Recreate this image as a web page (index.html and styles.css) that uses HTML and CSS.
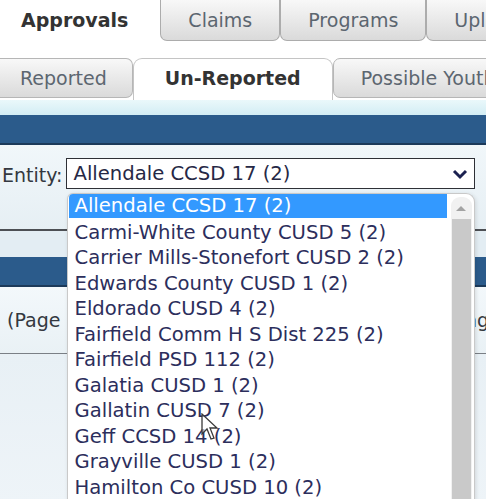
FILE: index.html
```html
<!DOCTYPE html>
<html lang="en">
<head>
    <meta charset="UTF-8" />
    <meta name="viewport" content="width=device-width, initial-scale=1.0"/>
    <title>Approvals - Un-Reported</title>
    <link rel="stylesheet" href="styles.css">
</head>
<body>
    <div class="page">
        <div class="tabs main-tabs">
            <div class="tab active first">Approvals</div>
            <div class="tab">Claims</div>
            <div class="tab">Programs</div>
            <div class="tab">Uploads</div>
        </div>

        <div class="tabs sub-tabs">
            <div class="tab first">Reported</div>
            <div class="tab active">Un-Reported</div>
            <div class="tab">Possible Youth</div>
        </div>

        <div class="band"></div>
        <div class="title-bar"></div>

        <div class="filter">
            <span class="filter-label">Entity:</span>
            <div class="select-wrap">
                <div class="select">
                    <span>Allendale CCSD 17 (2)</span>
                    <svg class="chevron" width="16" height="12" viewBox="0 0 16 12">
                        <path d="M2 3 L8 9 L14 3" fill="none" stroke="#1b2150" stroke-width="3"/>
                    </svg>
                </div>

                <!-- open dropdown list -->
                <div class="options">
                    <ul class="option-list">
                        <li class="selected">Allendale CCSD 17 (2)</li>
                        <li>Carmi-White County CUSD 5 (2)</li>
                        <li>Carrier Mills-Stonefort CUSD 2 (2)</li>
                        <li>Edwards County CUSD 1 (2)</li>
                        <li>Eldorado CUSD 4 (2)</li>
                        <li>Fairfield Comm H S Dist 225 (2)</li>
                        <li>Fairfield PSD 112 (2)</li>
                        <li>Galatia CUSD 1 (2)</li>
                        <li>Gallatin CUSD 7 (2)</li>
                        <li>Geff CCSD 14 (2)</li>
                        <li>Grayville CUSD 1 (2)</li>
                        <li>Hamilton Co CUSD 10 (2)</li>
                    </ul>
                    <div class="scrollbar">
                        <svg class="scroll-up" width="12" height="8" viewBox="0 0 12 8">
                            <path d="M1 7 L6 2 L11 7 Z" fill="#a3a3a3"/>
                        </svg>
                        <div class="thumb"></div>
                    </div>
                </div>
            </div>
        </div>

        <div class="grid">
            <div class="grid-gap"></div>
            <div class="grid-head"></div>
            <div class="pager">
                <span>(Page 1 of 1)</span>
                <span>Paging</span>
            </div>
            <div class="grid-rest"></div>
        </div>

        <svg class="cursor" width="18" height="28" viewBox="0 0 18 28">
            <path d="M1 1 L1 21 L6 16 L10 26 L13 25 L9 15 L16 15 Z" fill="#ffffff" fill-opacity="0.6" stroke="#3a3a3a" stroke-width="1.3"/>
        </svg>
    </div>
</body>
</html>
```

FILE: styles.css
```css
body {
    margin: 0;
    overflow: hidden;
    background-color: #ffffff;
    font-family: "DejaVu Sans", Verdana, sans-serif;
    font-size: 19px;
    color: #333333;
}
.page {
    position: relative;
    width: 486px;
    height: 499px;
    overflow: hidden;
}

/* tab rows */
.tabs {
    display: flex;
    white-space: nowrap;
}
.tab {
    flex: none;
    padding: 0 27px;
    color: #5c6670;
    background: linear-gradient(#f8f8f8, #dadada);
    border: 1px solid #acacac;
}
.main-tabs {
    height: 41px;
    margin-bottom: 17px;
}
.main-tabs .tab {
    line-height: 40px;
    border-top: none;
    border-radius: 0 0 7px 7px;
}
.main-tabs .tab.first {
    padding: 0 31px 0 20px;
}
.main-tabs .tab.active {
    background: #ffffff;
    border-color: transparent;
    font-weight: bold;
    color: #333333;
}
.sub-tabs {
    height: 42px;
    align-items: flex-start;
}
.sub-tabs .tab {
    height: 38px;
    line-height: 38px;
    border-radius: 7px;
    border-color: #b6b6b6;
}
.sub-tabs .tab.first {
    padding: 0 25px 0 20px;
    border-left: none;
    border-radius: 0 7px 7px 0;
}
.sub-tabs .tab.active {
    height: 41px;
    padding: 0 31px;
    background: #ffffff;
    border-color: #c4c4c4;
    border-bottom: none;
    border-radius: 9px 9px 0 0;
    font-weight: bold;
    color: #333333;
}

.band {
    height: 15px;
    background: linear-gradient(#eaf8fb, #d3edf4);
}
.title-bar {
    height: 28px;
    background-color: #2b5b8b;
    border-bottom: 2px solid #1c3a5a;
}

/* entity filter */
.filter {
    display: flex;
    align-items: flex-start;
    gap: 3px;
    height: 84px;
    padding: 0 0 0 2px;
    background: linear-gradient(#f1f7fa, #e6eff4);
    border-bottom: 2px solid #4c4f54;
}
.filter-label {
    margin-top: 19px;
    color: #333840;
}
.select-wrap {
    position: relative;
    margin-top: 13px;
}
.select {
    display: flex;
    align-items: center;
    justify-content: space-between;
    box-sizing: border-box;
    width: 409px;
    height: 31px;
    padding: 0 6px 0 7px;
    background-color: #ffffff;
    border: 1px solid #2e3036;
    color: #262845;
    font-size: 19.6px;
}
.chevron {
    display: block;
}

.options {
    position: absolute;
    top: 35px;
    left: 1px;
    display: flex;
    box-sizing: border-box;
    width: 408px;
    height: 320px;
    padding: 0 2px 0 1px;
    background-color: #ffffff;
    border: 1px solid #c9c9c9;
    border-bottom: none;
    border-radius: 6px 9px 0 0;
    box-shadow: 1px 1px 4px rgba(0, 0, 0, 0.12);
    z-index: 2;
}
.option-list {
    flex: 1;
    margin: 0;
    padding: 0;
    list-style: none;
    color: #2c2e5c;
    font-size: 19.6px;
}
.option-list li {
    height: 25.5px;
    line-height: 25.5px;
    padding-left: 6px;
    margin-right: 4px;
    white-space: nowrap;
}
.option-list li.selected {
    height: 24px;
    line-height: 24px;
    margin-bottom: 1.5px;
    background-color: #3399ff;
    color: #ffffff;
    border-radius: 4px 0 0 0;
}
.scrollbar {
    display: flex;
    flex-direction: column;
    align-items: center;
    width: 21px;
    margin-top: 3px;
    background-color: #f1f1f1;
    border-radius: 9px 9px 0 0;
}
.scroll-up {
    display: block;
    margin: 7px 0 7px;
}
.thumb {
    flex: 1;
    align-self: stretch;
    margin: 0 1px;
    background-color: #c9c9c9;
}

/* grid behind the dropdown */
.grid-gap {
    height: 26px;
    background-color: #e3edf3;
}
.grid-head {
    height: 28px;
    background-color: #2b5b8b;
    border-bottom: 2px solid #1c3a5a;
}
.pager {
    display: flex;
    justify-content: space-between;
    align-items: center;
    width: 497px;
    box-sizing: border-box;
    height: 67px;
    padding: 0 8px 0 7px;
    background: linear-gradient(#f3f8fb, #e9f1f5);
    border-bottom: 1px solid #7a7f85;
    color: #333840;
}
.grid-rest {
    height: 150px;
    background: linear-gradient(#e8f0f5, #eef4f8);
}

.cursor {
    position: absolute;
    top: 413px;
    left: 201px;
    z-index: 3;
}
```
